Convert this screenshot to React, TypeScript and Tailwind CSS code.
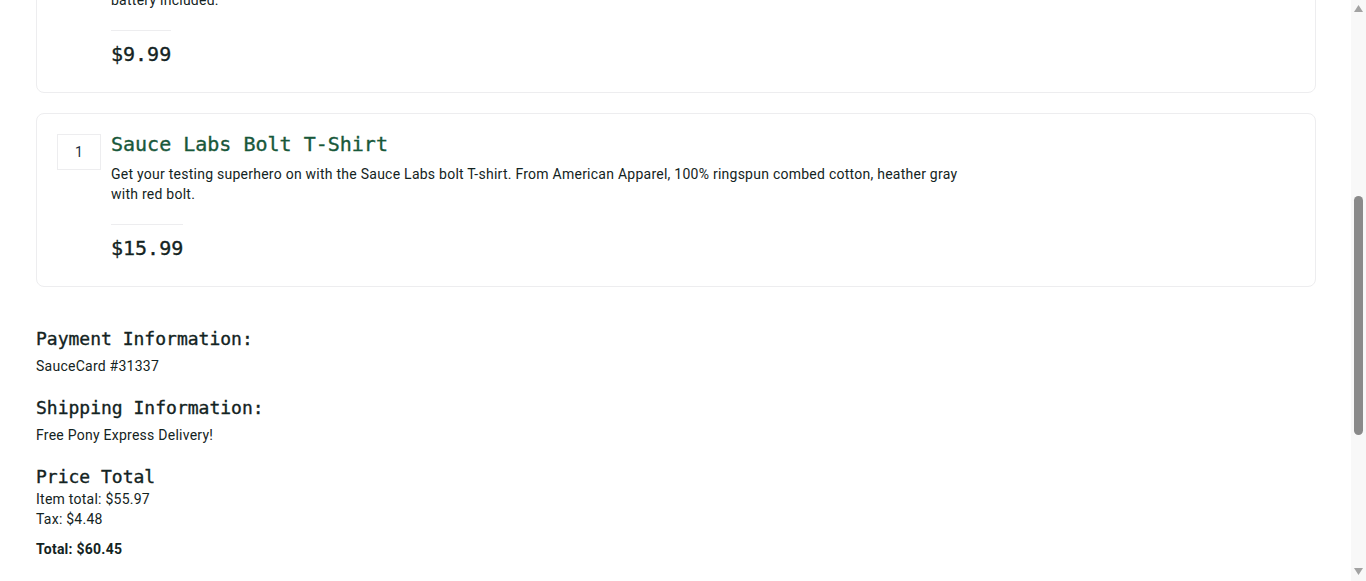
import { useLayoutEffect, useRef } from 'react';
import { ShoppingCart, Menu, ArrowLeft } from 'lucide-react';
import { FaTwitter, FaFacebookF, FaLinkedinIn } from 'react-icons/fa';

const items = [
  {
    qty: 1,
    name: 'Sauce Labs Backpack',
    desc: 'carry.allTheThings() with the sleek, streamlined Sly Pack that melds uncompromising style with unequaled laptop and tablet protection.',
    price: '$29.99',
  },
  {
    qty: 1,
    name: 'Sauce Labs Bike Light',
    desc: "A red light isn't the desired state in testing but it sure helps when riding your bike at night. Water-resistant with 3 lighting modes, 1 AAA battery included.",
    price: '$9.99',
  },
  {
    qty: 1,
    name: 'Sauce Labs Bolt T-Shirt',
    desc: 'Get your testing superhero on with the Sauce Labs bolt T-shirt. From American Apparel, 100% ringspun combed cotton, heather gray with red bolt.',
    price: '$15.99',
  },
];

const mono = "font-['DejaVu_Sans_Mono',monospace] [-webkit-text-stroke:0.35px] tracking-normal";

function Scrollbar() {
  return (
    <div className="flex w-[15px] shrink-0 flex-col bg-[#f8f8f8]">
      <div className="flex h-[15px] items-start justify-center pt-[5px]">
        <svg width="9" height="7" viewBox="0 0 9 7">
          <path d="M4.5 0 L9 7 L0 7 Z" fill="#a3a3a3" />
        </svg>
      </div>
      <div className="flex-1">
        <div className="mx-[3px] mt-[181px] h-[239px] rounded-full bg-[#8a8a8a]" />
      </div>
      <div className="flex h-[15px] items-start justify-center pt-[2px]">
        <svg width="9" height="7" viewBox="0 0 9 7">
          <path d="M0 0 L9 0 L4.5 7 Z" fill="#a3a3a3" />
        </svg>
      </div>
    </div>
  );
}

export default function App() {
  const pane = useRef<HTMLDivElement>(null);
  const lastCard = useRef<HTMLDivElement>(null);

  // the view sits further down the page, with the last cart item near the top
  useLayoutEffect(() => {
    const p = pane.current;
    const el = lastCard.current;
    if (p && el) p.scrollTop = el.getBoundingClientRect().top - p.getBoundingClientRect().top + p.scrollTop - 113;
  }, []);

  return (
    <div className="flex h-screen overflow-hidden bg-white font-['Roboto',sans-serif] tracking-[0.25px] text-[#132322]">
      <div ref={pane} className="flex-1 overflow-y-auto [scrollbar-width:none]">
        {/* Header */}
        <div className="border-b border-[#ededef]">
          <div className="flex h-[60px] items-center justify-between pl-[36px] pr-[35px]">
            <Menu className="h-6 w-6" />
            <div className={`${mono} text-2xl`}>Swag Labs</div>
            <ShoppingCart className="h-6 w-6" />
          </div>
          <div className="flex h-[60px] items-center pl-[36px] pr-[35px]">
            <span className={`${mono} text-lg`}>Checkout: Overview</span>
          </div>
        </div>

        {/* Cart list */}
        <div className="pl-[36px] pr-[35px]">
          <div className="flex h-[45px] items-center gap-[10px] text-sm">
            <span className="w-[44px] pl-[21px]">QTY</span>
            <span className="pl-[21px]">Description</span>
          </div>

          {items.map((item, i) => (
            <div
              key={item.name}
              ref={i === items.length - 1 ? lastCard : undefined}
              className="mb-[20px] flex gap-[10px] rounded-lg border border-[#ededef] p-[20px]"
            >
              <div className="flex h-[36px] w-[44px] shrink-0 items-center justify-center border border-[#ededef] text-sm text-[#22303f]">
                {item.qty}
              </div>
              <div className="flex flex-col items-start">
                <div className={`${mono} h-[24px] text-[20px] leading-[20px] text-[#18583a]`}>{item.name}</div>
                <div className="mt-[6px] max-w-[875px] text-sm leading-[20px]">{item.desc}</div>
                <div className={`${mono} mt-[20px] border-t border-[#ededef] pt-[11px] pb-[6px] text-[20px] leading-[24px]`}>
                  {item.price}
                </div>
              </div>
            </div>
          ))}

          {/* Summary */}
          <div className="pt-[20px]">
            <div className={`${mono} text-lg leading-[24px]`}>Payment Information:</div>
            <div className="pt-[5px] pb-[20px] text-sm leading-[20px]">SauceCard #31337</div>
            <div className={`${mono} text-lg leading-[24px]`}>Shipping Information:</div>
            <div className="pt-[5px] pb-[20px] text-sm leading-[20px]">Free Pony Express Delivery!</div>
            <div className={`${mono} text-lg leading-[24px]`}>Price Total</div>
            <div className="text-sm leading-[20px]">Item total: $55.97</div>
            <div className="text-sm leading-[20px]">Tax: $4.48</div>
            <div className="mt-[10px] text-sm font-bold leading-[20px]">Total: $60.45</div>
          </div>

          <div className="flex items-center justify-between py-[40px]">
            <button className="flex h-[48px] w-[220px] items-center justify-center gap-2 rounded-lg border border-[#ededef] text-base">
              <ArrowLeft className="h-4 w-4" />
              Cancel
            </button>
            <button className="h-[48px] w-[220px] rounded-lg bg-[#3ddc91] text-base font-medium">Finish</button>
          </div>
        </div>

        {/* Footer */}
        <footer className="bg-[#132322] px-[36px] py-[40px] text-white">
          <div className="flex gap-4">
            <FaTwitter className="h-5 w-5" />
            <FaFacebookF className="h-5 w-5" />
            <FaLinkedinIn className="h-5 w-5" />
          </div>
          <div className="mt-6 text-sm">© 2025 Sauce Labs. All Rights Reserved. Terms of Service | Privacy Policy</div>
        </footer>
      </div>
      <Scrollbar />
    </div>
  );
}
